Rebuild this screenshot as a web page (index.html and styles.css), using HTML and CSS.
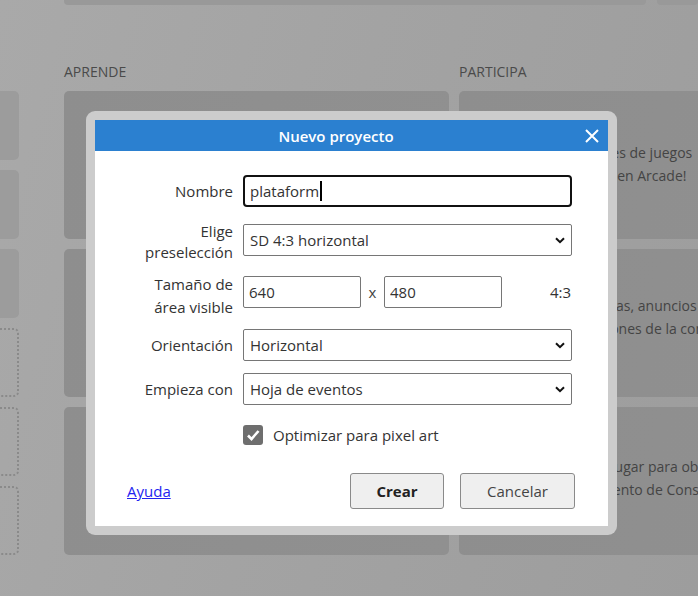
FILE: index.html
```html
<!DOCTYPE html>
<html lang="es">
<head>
<meta charset="utf-8">
<title>Nuevo proyecto</title>
<link rel="stylesheet" href="styles.css">
</head>
<body>
<div class="page">
  <div class="topstrip">
    <div class="strip-card strip-wide"></div>
    <div class="strip-card strip-rest"></div>
  </div>
  <div class="main">
    <div class="sidebar">
      <div class="side-card"></div>
      <div class="side-card"></div>
      <div class="side-card"></div>
      <div class="side-card dashed"></div>
      <div class="side-card dashed"></div>
      <div class="side-card dashed"></div>
    </div>
    <div class="col">
      <div class="col-title">APRENDE</div>
      <div class="card"></div>
      <div class="card"></div>
      <div class="card"></div>
    </div>
    <div class="col">
      <div class="col-title">PARTICIPA</div>
      <div class="card"><p class="card-text t1">¡Juega a miles de juegos<br>y publícalos en Arcade!</p></div>
      <div class="card"><p class="card-text t2">Lee las noticias, anuncios<br>y actualizaciones de la comunidad</p></div>
      <div class="card"><p class="card-text t3">El mejor lugar para obtener ayuda y<br>conocimiento de Construct</p></div>
    </div>
  </div>
</div>

<div class="dialog-frame">
  <div class="dialog">
    <div class="titlebar">
      <div class="title">Nuevo proyecto</div>
      <div class="close">
        <svg width="14" height="14" viewBox="0 0 14 14"><path d="M1 1 L13 13 M13 1 L1 13" stroke="#fff" stroke-width="2" fill="none"/></svg>
      </div>
    </div>
    <div class="form">
      <div class="row">
        <div class="label">Nombre</div>
        <div class="control">
          <div class="textbox focused">plataform<span class="caret"></span></div>
        </div>
      </div>
      <div class="row row-r2">
        <div class="label two">Elige<br>preselección</div>
        <div class="control">
          <div class="selectwrap">
            <select class="select"><option>SD 4:3 horizontal</option></select>
            <svg class="chev" width="10" height="7" viewBox="0 0 10 7"><path d="M1 1.2 L5 5.2 L9 1.2" stroke="#111" stroke-width="2" fill="none"/></svg>
          </div>
        </div>
      </div>
      <div class="row row-r3">
        <div class="label two tall">Tamaño de<br>área visible</div>
        <div class="control size">
          <input class="num" type="text" value="640">
          <span class="times">x</span>
          <input class="num" type="text" value="480">
          <span class="ratio">4:3</span>
        </div>
      </div>
      <div class="row row-r4">
        <div class="label">Orientación</div>
        <div class="control">
          <div class="selectwrap">
            <select class="select"><option>Horizontal</option></select>
            <svg class="chev" width="10" height="7" viewBox="0 0 10 7"><path d="M1 1.2 L5 5.2 L9 1.2" stroke="#111" stroke-width="2" fill="none"/></svg>
          </div>
        </div>
      </div>
      <div class="row row-r5">
        <div class="label">Empieza con</div>
        <div class="control">
          <div class="selectwrap">
            <select class="select"><option>Hoja de eventos</option></select>
            <svg class="chev" width="10" height="7" viewBox="0 0 10 7"><path d="M1 1.2 L5 5.2 L9 1.2" stroke="#111" stroke-width="2" fill="none"/></svg>
          </div>
        </div>
      </div>
      <div class="row row-r6">
        <div class="label"></div>
        <div class="control check">
          <span class="checkbox">
            <svg width="20" height="20" viewBox="0 0 20 20"><path d="M5 10.5 L8.5 14 L15.5 6" stroke="#fff" stroke-width="2.6" fill="none"/></svg>
          </span>
          <span class="check-text">Optimizar para pixel art</span>
        </div>
      </div>
      <div class="footer">
        <a class="help" href="#">Ayuda</a>
        <div class="buttons">
          <button class="btn primary">Crear</button>
          <button class="btn">Cancelar</button>
        </div>
      </div>
    </div>
  </div>
</div>
</body>
</html>
```
FILE: styles.css
```css
html, body {
  margin: 0;
  padding: 0;
}
body {
  width: 698px;
  height: 596px;
  overflow: hidden;
  position: relative;
  font-family: "Open Sans", "Noto Sans", "Liberation Sans", sans-serif;
  font-size: 14px;
  background: linear-gradient(105deg, #a9a9a9 0%, #a3a3a3 45%, #9d9d9d 100%);
}
.page {
  width: 698px;
  height: 596px;
  overflow: hidden;
}
.topstrip {
  display: flex;
  gap: 11px;
  padding-left: 64px;
  height: 5px;
}
.strip-card {
  height: 5px;
  background: #999999;
  border-radius: 0 0 4px 4px;
}
.strip-wide { width: 582px; flex: none; }
.strip-rest { flex: 1; }

.main {
  display: flex;
}
.sidebar {
  width: 200px;
  margin-left: -181px;
  margin-right: 45px;
  padding-top: 86px;
  display: flex;
  flex-direction: column;
  gap: 10px;
  flex: none;
}
.side-card {
  height: 69px;
  background: #9c9c9c;
  border-radius: 5px;
  box-sizing: border-box;
}
.side-card.dashed {
  background: transparent;
  border: 2px dotted #8a8a8a;
}
.col {
  width: 385px;
  flex: none;
  display: flex;
  flex-direction: column;
  gap: 10px;
  margin-right: 10px;
}
.col-title {
  padding-top: 57px;
  line-height: 20px;
  height: 20px;
  margin-bottom: -1px;
  color: #4a4a4a;
  font-size: 14px;
}
.card {
  height: 148px;
  background: linear-gradient(100deg, #8e8e8e, #909090);
  border-radius: 5px;
  position: relative;
  overflow: hidden;
}
.card-text {
  margin: 0;
  color: #444;
  font-size: 14px;
  line-height: 23px;
  white-space: nowrap;
}
.t1 { padding-top: 50px; padding-left: 78px; }
.t2 { padding-top: 45px; padding-left: 73px; }
.t3 { padding-top: 48px; padding-left: 95px; }

/* dialog */
.dialog-frame {
  position: absolute;
  left: 86px;
  top: 111px;
  width: 531px;
  height: 424px;
  box-sizing: border-box;
  padding: 9px;
  background: #cccccc;
  border-radius: 9px;
}
.dialog {
  background: #fff;
  height: 100%;
  display: flex;
  flex-direction: column;
}
.titlebar {
  height: 31px;
  background: #2b80d0;
  display: flex;
  align-items: center;
  color: #fff;
}
.title {
  flex: 1;
  text-align: center;
  font-size: 15px;
  font-weight: 600;
}
.close {
  width: 30px;
  height: 31px;
  display: flex;
  align-items: center;
  justify-content: center;
  padding-right: 1px;
}
.form {
  padding: 24px 36px 17px 0;
  color: #333;
  font-size: 15px;
}
.row {
  display: flex;
  align-items: center;
}
.label {
  width: 148px;
  flex: none;
  text-align: right;
  padding-right: 10px;
  box-sizing: border-box;
  line-height: 21px;
}
.label.two {
  padding-top: 4px;
}
.label.tall {
  line-height: 23px;
  padding-top: 8px;
}
.control {
  flex: 1;
}
.row-r2 { margin-top: 10px; }
.row-r3 { margin-top: 2px; }
.row-r4 { margin-top: 10px; }
.row-r5 { margin-top: 12px; }
.row-r6 { margin-top: 19px; }

.textbox {
  height: 32px;
  box-sizing: border-box;
  border: 2px solid #111;
  border-radius: 4px;
  padding: 0 5px;
  display: flex;
  align-items: center;
  color: #333;
}
.caret {
  display: inline-block;
  width: 2px;
  height: 20px;
  background: #000;
  margin-left: 1px;
}
.selectwrap {
  position: relative;
}
.select {
  appearance: none;
  -webkit-appearance: none;
  width: 100%;
  height: 32px;
  box-sizing: border-box;
  border: 1px solid #767676;
  border-radius: 2px;
  background: #fff;
  padding: 0 6px;
  font: inherit;
  color: #333;
}
.chev {
  position: absolute;
  right: 7px;
  top: 13px;
  pointer-events: none;
}
.size {
  display: flex;
  align-items: center;
}
.num {
  width: 118px;
  height: 32px;
  box-sizing: border-box;
  border: 1px solid #767676;
  border-radius: 2px;
  padding: 0 5px;
  font: inherit;
  color: #333;
  flex: none;
}
.times {
  width: 23px;
  text-align: center;
  color: #444;
}
.ratio {
  flex: 1;
  text-align: right;
  padding-right: 1px;
  color: #333;
}
.check {
  display: flex;
  align-items: center;
  height: 21px;
}
.checkbox {
  width: 20px;
  height: 20px;
  background: #6e6e6e;
  border-radius: 3px;
  display: inline-flex;
  flex: none;
}
.check-text {
  margin-left: 10px;
  color: #333;
}
.footer {
  margin-top: 28px;
  display: flex;
  align-items: center;
  justify-content: space-between;
  padding-left: 32px;
  margin-right: -3px;
}
.help {
  color: #2323f0;
  text-decoration: underline;
  font-size: 15px;
}
.buttons {
  display: flex;
  gap: 16px;
}
.btn {
  height: 36px;
  box-sizing: border-box;
  border: 1px solid #8a8a8a;
  border-radius: 3px;
  background: #efefef;
  font: inherit;
  color: #444;
  padding: 0;
  width: 115px;
}
.btn.primary {
  width: 94px;
  font-weight: 700;
  color: #222;
}
```
